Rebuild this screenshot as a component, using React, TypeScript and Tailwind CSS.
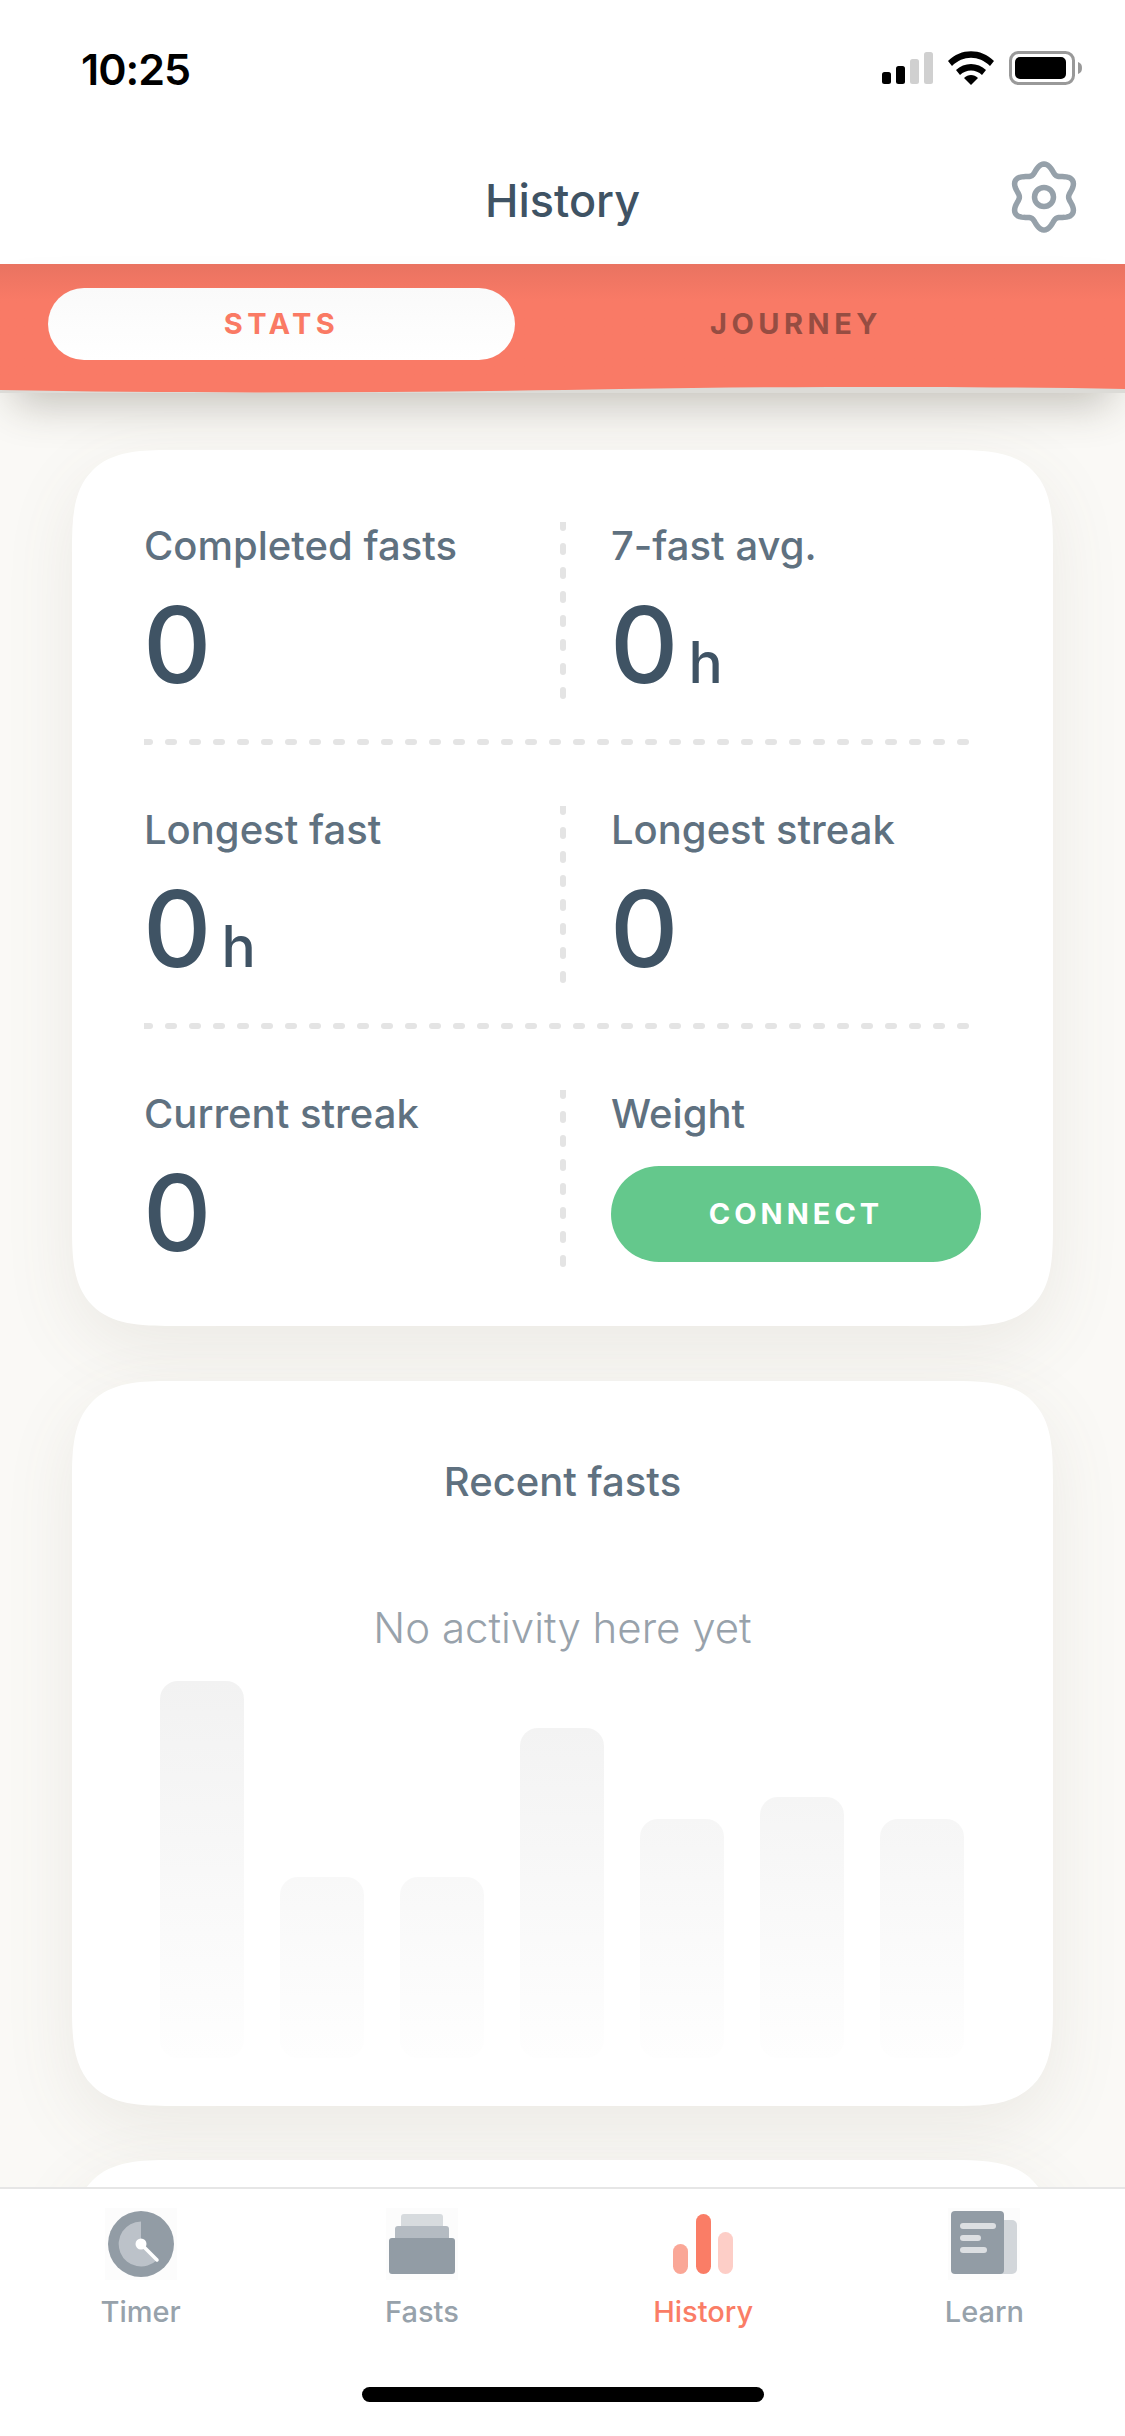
const FONT = "font-['Inter','Noto_Sans',sans-serif]"

// six lobed gear outline, polar curve around the centre of a 72x72 box
const GEAR_PATH =
  Array.from({ length: 121 }, (_, i) => {
    const t = (i / 120) * Math.PI * 2
    const r = 28.8 + 4.2 * Math.cos(6 * t)
    const x = 36 + r * Math.sin(t)
    const y = 36 - r * Math.cos(t)
    return `${i === 0 ? 'M' : 'L'}${x.toFixed(2)} ${y.toFixed(2)}`
  }).join(' ') + ' Z'

const BARS = [
  'h-[377px] from-[#f2f2f2]',
  'h-[181px] from-[#f8f8f8]',
  'h-[181px] from-[#f8f8f8]',
  'h-[330px] from-[#f3f3f3]',
  'h-[239px] from-[#f6f6f6]',
  'h-[261px] from-[#f5f5f5]',
  'h-[239px] from-[#f6f6f6]',
]

function StatusBar() {
  return (
    <div className="flex h-[132px] items-start justify-between pl-[81px] pr-[43px] pt-[44px]">
      <span className="font-['Inter',sans-serif] text-[43px] font-semibold leading-[50px] tracking-[-1px] text-black">10:25</span>
      <svg width="200" height="36" viewBox="0 0 200 36" className="mt-[7px]">
        <rect x="0" y="21" width="9" height="12" rx="2.5" fill="#000" />
        <rect x="14" y="15" width="9" height="18" rx="2.5" fill="#000" />
        <rect x="28" y="8" width="9" height="25" rx="2.5" fill="#d0d0d0" />
        <rect x="42" y="1" width="9" height="32" rx="2.5" fill="#d0d0d0" />
        <path d="M66 10 C79 -3 99 -3 112 10 L108 15 C97 4 81 4 70 15 Z" fill="#000" />
        <path d="M74 19 C82 11 96 11 104 19 L100 24 C94 18 84 18 78 24 Z" fill="#000" />
        <path d="M82 27 C86 23 92 23 96 27 L89 34 Z" fill="#000" />
        <rect x="128.5" y="1.5" width="63" height="31" rx="8" fill="none" stroke="#999" strokeWidth="3" />
        <rect x="133" y="6" width="51" height="22" rx="5" fill="#000" />
        <path d="M196 11 C199 12 200 14 200 17 C200 20 199 22 196 23 Z" fill="#999" />
      </svg>
    </div>
  )
}

function Header() {
  return (
    <div className="relative flex h-[132px] items-start justify-center">
      <h1 className="mt-[42px] text-[45px] font-medium leading-[54px] text-[#3f5364]">History</h1>
      <svg width="72" height="72" viewBox="0 0 72 72" className="absolute right-[45px] top-[29px]">
        <path d={GEAR_PATH} fill="none" stroke="#96a1aa" strokeWidth="5.5" strokeLinejoin="round" />
        <circle cx="36" cy="36" r="9.5" fill="none" stroke="#96a1aa" strokeWidth="5.5" />
      </svg>
    </div>
  )
}

function Tabs() {
  return (
    <div className="relative z-10 shadow-[0_24px_44px_-14px_rgba(70,65,50,0.32)]">
      <div className="flex h-[123px] items-start bg-gradient-to-b from-[#e97361] from-0% to-[#f97a66] to-30% pl-[48px] pt-[24px]">
        <div className="flex h-[72px] w-[467px] items-center justify-center rounded-[36px] bg-white bg-gradient-to-b from-[#fafafa] to-white text-[29px] font-bold tracking-[4.5px] text-[#fa7a64]">
          STATS
        </div>
        <div className="flex h-[72px] w-[562px] items-center justify-center text-[29px] font-bold tracking-[4.5px] text-[#964d42]">
          JOURNEY
        </div>
      </div>
      <svg width="1125" height="6" viewBox="0 0 1125 6" preserveAspectRatio="none" className="block bg-[#dcdbd7]">
        <path d="M0 3 C200 7 420 5.5 620 2 C800 -1 980 -0.5 1125 2 L1125 0 L0 0 Z" fill="#f97a66" />
      </svg>
    </div>
  )
}

function HDash() {
  return (
    <div className="mb-[61px] ml-[72px] mt-[40px] flex gap-[12px]">
      <span className="h-[6px] w-[9px] rounded-r-full bg-[#e4e4e4]" />
      {Array.from({ length: 34 }).map((_, i) => (
        <span key={i} className="h-[6px] w-[12px] rounded-full bg-[#e4e4e4]" />
      ))}
    </div>
  )
}

function VDash() {
  return (
    <div className="flex h-[177px] w-[6px] flex-col gap-[12px]">
      <span className="h-[9px] w-[6px] rounded-b-full bg-[#e4e4e4]" />
      {Array.from({ length: 7 }).map((_, i) => (
        <span key={i} className="h-[12px] w-[6px] rounded-full bg-[#e4e4e4]" />
      ))}
    </div>
  )
}

function Stat({ label, value, unit }: { label: string; value?: string; unit?: string }) {
  return (
    <div>
      <div className="text-[40px] font-medium leading-[48px] text-[#5f7180]">{label}</div>
      {value && (
        <div className="mt-[22px] flex items-baseline text-[#3f5364]">
          <span className="ml-[-1px] text-[106px] font-medium leading-[106px]">{value}</span>
          {unit && <span className="ml-[10px] text-[57px] font-medium leading-[57px]">{unit}</span>}
        </div>
      )}
    </div>
  )
}

function StatRow({ left, right }: { left: React.ReactNode; right: React.ReactNode }) {
  return (
    <div className="grid grid-cols-[416px_6px_1fr] pl-[72px]">
      <div>{left}</div>
      <VDash />
      <div className="pl-[45px]">{right}</div>
    </div>
  )
}

function StatsCard() {
  return (
    <div className="mx-[72px] h-[876px] rounded-[100px] bg-white pt-[72px] shadow-[0_22px_70px_rgba(110,100,75,0.1)] [corner-shape:superellipse(1.6)]">
      <StatRow left={<Stat label="Completed fasts" value="0" />} right={<Stat label="7-fast avg." value="0" unit="h" />} />
      <HDash />
      <StatRow left={<Stat label="Longest fast" value="0" unit="h" />} right={<Stat label="Longest streak" value="0" />} />
      <HDash />
      <StatRow
        left={<Stat label="Current streak" value="0" />}
        right={
          <div>
            <Stat label="Weight" />
            <button className="mt-[28px] flex h-[96px] w-[370px] items-center justify-center rounded-full bg-[#64c88c] text-[29px] font-bold tracking-[4px] text-white">
              CONNECT
            </button>
          </div>
        }
      />
    </div>
  )
}

function RecentCard() {
  return (
    <div className="mx-[72px] mt-[55px] h-[725px] rounded-[100px] bg-white pt-[77px] shadow-[0_22px_70px_rgba(110,100,75,0.1)] [corner-shape:superellipse(1.6)]">
      <div className="text-center text-[40px] font-medium leading-[48px] text-[#5f7180]">Recent fasts</div>
      <div className="mt-[94px] text-center text-[42px] font-light leading-[56px] text-[#98a2ab]">No activity here yet</div>
      <div className="mt-[25px] flex h-[377px] items-end gap-[36px] pl-[88px]">
        {BARS.map((cls, i) => (
          <div key={i} className={`w-[84px] rounded-[18px] bg-gradient-to-b to-[#fefefe] ${cls}`} />
        ))}
      </div>
    </div>
  )
}

function TimerIcon() {
  return (
    <svg width="72" height="72" viewBox="0 0 72 72" className="bg-[#fcfcfc]">
      <circle cx="36" cy="36" r="33" fill="#929ca5" />
      <path d="M36 36 L36 13.5 A22.5 22.5 0 1 0 52 52 Z" fill="#bcc2c9" />
      <line x1="36" y1="36" x2="52" y2="52" stroke="#fff" strokeWidth="3.5" strokeLinecap="round" />
      <circle cx="36" cy="36" r="5.5" fill="#fff" />
    </svg>
  )
}

function FastsIcon() {
  return (
    <svg width="72" height="72" viewBox="0 0 72 72" className="bg-[#fcfcfc]">
      <rect x="15" y="6" width="42" height="16" rx="3" fill="#d7dbde" />
      <rect x="9" y="18" width="54" height="16" rx="3" fill="#b4bbc2" />
      <rect x="3" y="30" width="66" height="36" rx="3" fill="#929ca5" />
    </svg>
  )
}

function HistoryIcon() {
  return (
    <svg width="72" height="72" viewBox="0 0 72 72">
      <rect x="6" y="36" width="15" height="30" rx="7.5" fill="#faa797" />
      <rect x="29" y="6" width="15" height="60" rx="7.5" fill="#fa7d66" />
      <rect x="51" y="24" width="15" height="42" rx="7.5" fill="#fdcec7" />
    </svg>
  )
}

function LearnIcon() {
  return (
    <svg width="72" height="72" viewBox="0 0 72 72" className="bg-[#fcfcfc]">
      <rect x="40" y="12" width="29" height="54" rx="5" fill="#d2d6da" />
      <rect x="3" y="3" width="53" height="63" rx="4" fill="#929ca5" />
      <rect x="12" y="15" width="36" height="6" rx="3" fill="#dcdfe2" />
      <rect x="12" y="27" width="21" height="6" rx="3" fill="#dcdfe2" />
      <rect x="12" y="39" width="27" height="6" rx="3" fill="#dcdfe2" />
    </svg>
  )
}

function TabItem({ icon, label, active }: { icon: React.ReactNode; label: string; active?: boolean }) {
  return (
    <div className="flex flex-col items-center">
      {icon}
      <span className={`mt-[14px] text-[29px] font-medium leading-[36px] ${active ? 'text-[#fa7d66]' : 'text-[#97a2ab]'}`}>
        {label}
      </span>
    </div>
  )
}

function TabBar() {
  return (
    <div className="relative z-10 h-[249px] border-t-2 border-[#e6e6e6] bg-white pt-[19px]">
      <div className="grid grid-cols-4">
        <TabItem icon={<TimerIcon />} label="Timer" />
        <TabItem icon={<FastsIcon />} label="Fasts" />
        <TabItem icon={<HistoryIcon />} label="History" active />
        <TabItem icon={<LearnIcon />} label="Learn" />
      </div>
      <div className="mx-auto mt-[57px] h-[15px] w-[402px] rounded-full bg-black" />
    </div>
  )
}

export default function App() {
  return (
    <div className={`flex h-[2436px] w-[1125px] flex-col overflow-hidden bg-[#faf9f6] ${FONT}`}>
      <div className="bg-white">
        <StatusBar />
        <Header />
      </div>
      <Tabs />
      <main className="flex-1 overflow-hidden pt-[57px]">
        <StatsCard />
        <RecentCard />
        <div className="mx-[72px] mt-[54px] h-[400px] rounded-[100px] bg-white shadow-[0_22px_70px_rgba(110,100,75,0.1)] [corner-shape:superellipse(1.6)]" />
      </main>
      <TabBar />
    </div>
  )
}
